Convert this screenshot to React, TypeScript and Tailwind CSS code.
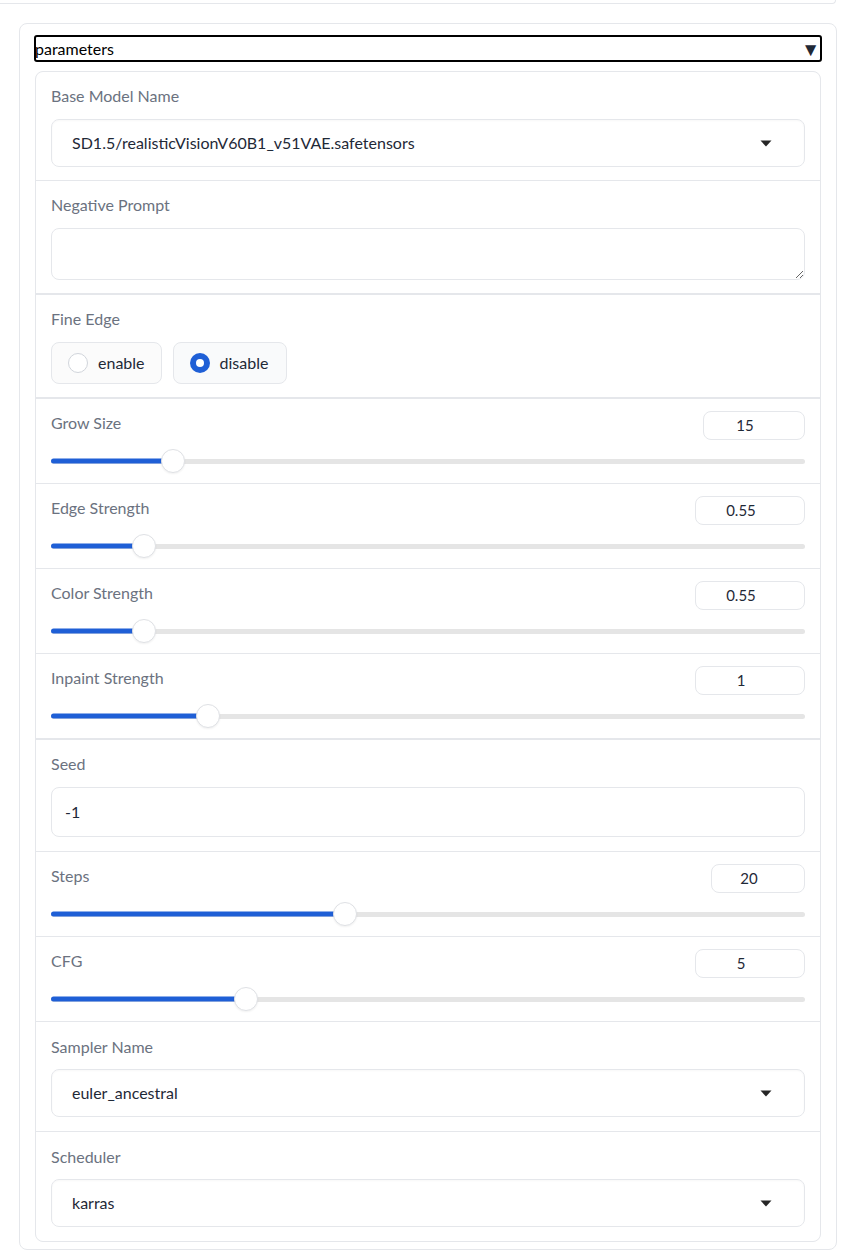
import React from 'react';

type SliderRow = {
  label: string;
  value: string;
  inputWidth: string;
  pct: number;
  thick?: boolean;
};

const Caret = () => (
  <svg width="12" height="7" viewBox="0 0 12 7" className="shrink-0">
    <path d="M0.5 0.5 H11.5 L6 6.5 Z" fill="#262626" />
  </svg>
);

const Label: React.FC<{ children: React.ReactNode }> = ({ children }) => (
  <div className="h-6 leading-6 text-[16px] text-[#6b7280]">{children}</div>
);

const Dropdown: React.FC<{ label: string; value: string; lower?: boolean }> = ({ label, value, lower }) => (
  <div className={`bg-white px-[15px] ${lower ? 'pt-[13px] pb-[14px]' : 'pt-3 pb-[13px]'}`}>
    <Label>{label}</Label>
    <div
      className={`${lower ? 'mt-[10px]' : 'mt-[11px]'} h-[48px] flex items-center justify-between pl-[20px] pr-[32px] rounded-lg border border-[#e5e7eb] bg-white shadow-[inset_0_1px_2px_rgba(0,0,0,0.03)] text-[16px] text-[#1f2937]`}
    >
      <span>{value}</span>
      <Caret />
    </div>
  </div>
);

const Slider: React.FC<SliderRow> = ({ label, value, inputWidth, pct, thick }) => (
  <div className={`bg-white px-[15px] pt-3 pb-[10px] ${thick ? 'mb-px' : ''}`}>
    <div className="flex items-start justify-between h-[29px]">
      <Label>{label}</Label>
      <div
        className={`${inputWidth} h-[29px] flex items-center justify-center pr-[18px] rounded-lg border border-[#e5e7eb] bg-white text-[15px] text-[#1f2937]`}
      >
        {value}
      </div>
    </div>
    <div className="relative mt-[9px] h-6 flex items-center">
      <div className="w-full h-[5px] rounded-full bg-[#e5e5e5]" />
      <div
        className="absolute left-0 top-1/2 -translate-y-1/2 h-[5px] rounded-l-full bg-[#1f5fd6]"
        style={{ width: `${pct}%` }}
      />
      <div
        className="absolute top-0 w-6 h-6 -translate-x-1/2 rounded-full bg-white border border-[#dfe1e5] shadow-[0_1px_2px_rgba(0,0,0,0.06)]"
        style={{ left: `${pct}%` }}
      />
    </div>
  </div>
);

const sliders1: SliderRow[] = [
  { label: 'Grow Size', value: '15', inputWidth: 'w-[102px]', pct: 16.2 },
  { label: 'Edge Strength', value: '0.55', inputWidth: 'w-[110px]', pct: 12.35 },
  { label: 'Color Strength', value: '0.55', inputWidth: 'w-[110px]', pct: 12.35 },
  { label: 'Inpaint Strength', value: '1', inputWidth: 'w-[110px]', pct: 20.85, thick: true },
];

const sliders2: SliderRow[] = [
  { label: 'Steps', value: '20', inputWidth: 'w-[94px]', pct: 39 },
  { label: 'CFG', value: '5', inputWidth: 'w-[110px]', pct: 25.8 },
];

export default function App() {
  return (
    <div className="min-h-screen bg-white font-['Lato','Noto_Sans',sans-serif]">
      <div className="w-[836px] h-[4px] border-b border-r border-[#e5e7eb] rounded-br-lg" />

      <div className="ml-[19px] mt-[19px] w-[818px] rounded-lg border border-[#e5e7eb] bg-white px-[14px] pt-[11px] pb-[7px]">
        <div className="h-[27px] flex items-center justify-between border-2 border-black rounded-[3px] pr-0 text-[16px] text-black">
          <span className="-ml-px">parameters</span>
          <span className="text-[19px] text-[#1f2937] leading-none">▼</span>
        </div>

        <div className="mt-[9px] ml-px w-[786px] rounded-lg border border-[#e5e7eb] overflow-hidden flex flex-col gap-px bg-[#e5e7eb]">
          <Dropdown label="Base Model Name" value="SD1.5/realisticVisionV60B1_v51VAE.safetensors" />

          <div className="bg-white px-[15px] pt-3 pb-[13px] mb-px">
            <Label>Negative Prompt</Label>
            <textarea
              className="mt-[11px] block w-full h-[52px] rounded-lg border border-[#e5e7eb] bg-white outline-none"
              defaultValue=""
            />
          </div>

          <div className="bg-white px-[15px] pt-3 pb-[13px] mb-px">
            <Label>Fine Edge</Label>
            <div className="mt-[11px] flex gap-[11px]">
              <div className="h-[42px] flex items-center gap-[10px] pl-[16px] pr-[16px] rounded-lg border border-[#e5e7eb] bg-[#fbfbfb] text-[16px] text-[#1f2937]">
                <span className="w-5 h-5 rounded-full border border-[#d1d5db] bg-white" />
                <span>enable</span>
              </div>
              <div className="h-[42px] flex items-center gap-[10px] pl-[16px] pr-[18px] rounded-lg border border-[#e5e7eb] bg-[#f9fafb] text-[16px] text-[#1f2937]">
                <span className="w-5 h-5 rounded-full bg-[#1f5fd6] flex items-center justify-center">
                  <span className="w-2 h-2 rounded-full bg-white" />
                </span>
                <span>disable</span>
              </div>
            </div>
          </div>

          {sliders1.map((s) => (
            <Slider key={s.label} {...s} />
          ))}

          <div className="bg-white px-[15px] pt-3 pb-[14px]">
            <Label>Seed</Label>
            <div className="mt-[11px] h-[50px] flex items-center px-[13px] rounded-lg border border-[#e5e7eb] bg-white text-[16px] text-[#1f2937]">
              -1
            </div>
          </div>

          {sliders2.map((s) => (
            <Slider key={s.label} {...s} />
          ))}

          <Dropdown label="Sampler Name" value="euler_ancestral" lower />
          <Dropdown label="Scheduler" value="karras" lower />
        </div>
      </div>
    </div>
  );
}
